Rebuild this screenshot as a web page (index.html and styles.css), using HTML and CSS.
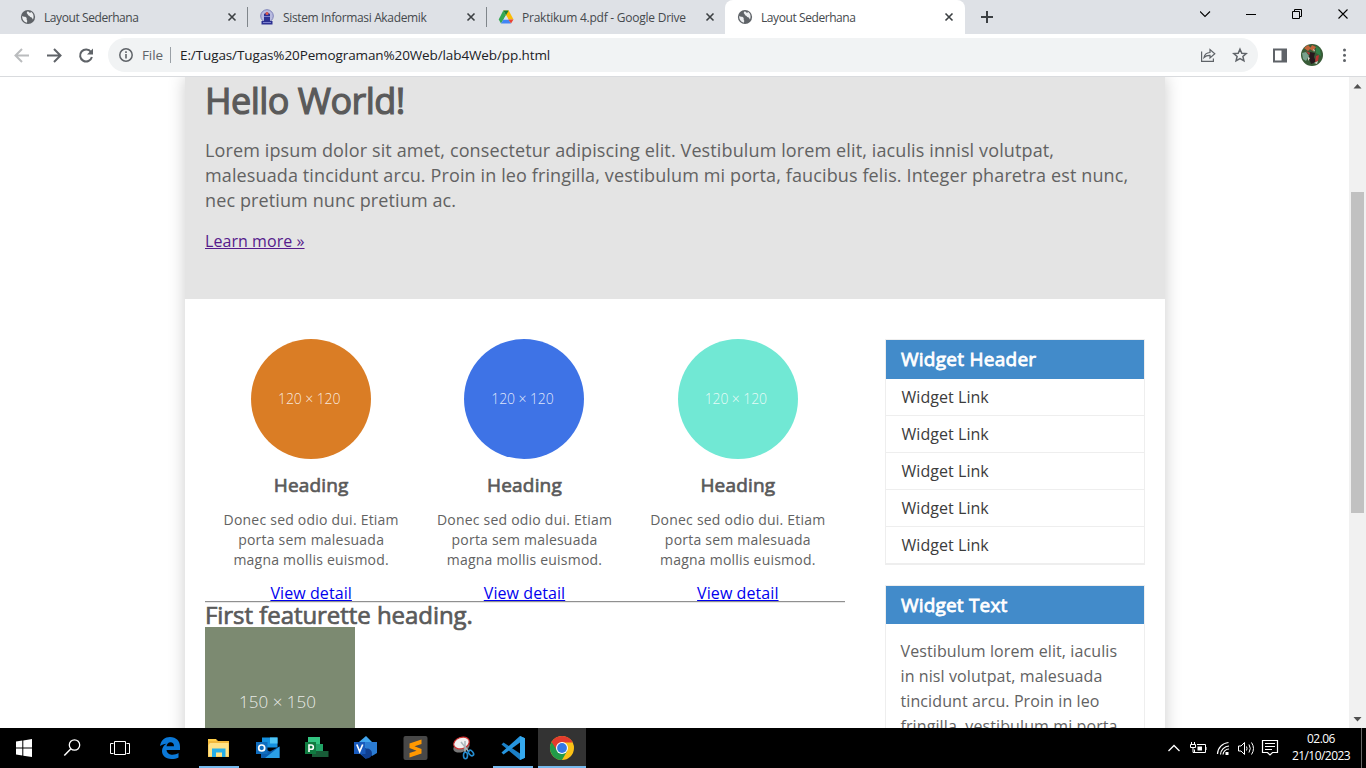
FILE: index.html
```html
<!DOCTYPE html>
<html lang="id">
<head>
<meta charset="utf-8">
<title>Layout Sederhana</title>
<link rel="stylesheet" href="styles.css">
</head>
<body>
<svg class="defs" width="0" height="0">
  <defs>
    <symbol id="globe" viewBox="0 0 16 16"><circle cx="8" cy="8" r="7.1" fill="#5f6368"/><path d="M2.2 7.1C3.5 8 5 7.5 6.300 8.400 7.300 9.200 6.200 10.400 7 11.300 7.600 12 6.900 13.200 6.900 13.700 4.300 13.300 1.900 10.800 2.200 7.100ZM8 2.300C6.700 3 6.300 4.200 7.300 4.800 8.300 5.300 7.300 6.300 8.700 6.600 10.200 6.900 9.500 8.300 11 8.300 12.100 8.300 12.200 9.800 12.900 10.600 14.500 7.500 13.200 3.600 10.700 2.700 11 4 10 4 9.400 3.600Z" fill="#eceef0"/></symbol>
    <symbol id="x" viewBox="0 0 10 10"><path d="M1.500 1.500 8.500 8.500M8.500 1.500 1.500 8.500" stroke="#3c4043" stroke-width="1.600" fill="none"/></symbol>
  </defs>
</svg>
<div class="screen">
  <div class="tabs">
    <div class="tab"><svg class="fav"><use href="#globe"/></svg><span class="title">Layout Sederhana</span><svg class="close"><use href="#x"/></svg></div>
    <div class="tab sep"><svg class="fav" viewBox="0 0 16 16"><circle cx="8" cy="7" r="6.300" fill="#b9bbe0" stroke="#7d81b8" stroke-width="1"/><path d="M2.500 12h11v3.500h-11zM5 5l3-2 3 2v7H5z" fill="#2d3192"/><circle cx="8" cy="4.500" r="1.500" fill="#e0584c"/><path d="M5 7.500h6M4 13.500h8" stroke="#7d82cf"/></svg><span class="title t2">Sistem Informasi Akademik</span><svg class="close"><use href="#x"/></svg></div>
    <div class="tab sep"><svg class="fav" viewBox="0 0 16 16"><path d="M5.300 1.500h5.400L15.500 10.500H10.500z" fill="#fbbc04"/><path d="M5.300 1.500h5.400L8 6.200z" fill="#188038"/><path d="M5.300 1.500 8 6.200 3 14.500.7 10.500z" fill="#34a853"/><path d="M5.500 10.500h5L13 14.500H3z" fill="#4285f4"/><path d="M10.300 10.500h5.200L13 14.500z" fill="#ea4335"/><path d="M8 6.200 10.500 10.500h-5z" fill="#dee1e6"/></svg><span class="title t3">Praktikum 4.pdf - Google Drive</span><svg class="close"><use href="#x"/></svg></div>
    <div class="tab active"><svg class="fav"><use href="#globe"/></svg><span class="title">Layout Sederhana</span><svg class="close"><use href="#x"/></svg></div>
    <svg class="plus" viewBox="0 0 12 12"><path d="M6 0v12M0 6h12" stroke="#3c4043" stroke-width="2"/></svg>
    <svg class="winctl" viewBox="0 0 166 34" fill="none" stroke="#000"><path d="M0 11.500 5 16.500 10 11.500" stroke-width="1.100"/><path d="M46 14.500h10" /><path d="M92.500 11.500h7v7h-7zM94.500 11.500v-2h7v7h-2"/><path d="M138.500 9.500l9 9M147.500 9.500l-9 9" stroke-width="1.100"/></svg>
  </div>
  <div class="toolbar">
    <svg class="nav" viewBox="0 0 108 42" fill="none" stroke-width="2"><path d="M29 21.500H16M22 15l-6.500 6.500L22 28" stroke="#babcbe"/><path d="M47 21.500h13M54 15l6.500 6.500L54 28" stroke="#5f6368"/><path d="M91 18a6 6 0 1 0 .9 5" stroke="#5f6368"/><path d="M93 14.500v6h-6z" fill="#5f6368" stroke="none"/></svg>
    <div class="omnibox">
      <svg class="info" viewBox="0 0 14 14"><circle cx="7" cy="7" r="6.200" fill="none" stroke="#5f6368" stroke-width="1.500"/><path d="M7 6v4.500M7 3.300v1.600" stroke="#5f6368" stroke-width="1.600"/></svg>
      <span class="scheme">File</span><i class="bar"></i><span class="url">E:/Tugas/Tugas%20Pemograman%20Web/lab4Web/pp.html</span>
      <svg class="acts" viewBox="0 0 50 16" fill="none" stroke="#5f6368" stroke-width="1.200"><path d="M1.600 4.500v9.900h11.800v-3M4 10.500C4.500 7.500 6.500 5.700 10 5.500V2.500l4.800 4.300L10 11V8.300C7.500 8.200 5.500 9 4 10.500Z"/><path d="M40 2.200l1.800 4 4.400.4-3.300 2.900 1 4.300L40 11.500l-3.900 2.300 1-4.300-3.300-2.900 4.400-.4Z" stroke-width="1.500"/></svg>
    </div>
    <svg class="right" viewBox="0 0 108 42"><path d="M16 15.500h12v12H16z" fill="none" stroke="#5f6368" stroke-width="2"/><path d="M23.500 15h5v13h-5z" fill="#5f6368"/>
      <circle cx="54" cy="21" r="11" fill="#385b37"/><path d="M46 14l4-3 3 3-3 3zM54 11l4 2-3 4-3-2z" fill="#c3643a"/><path d="M58 12l4 3 1 7-5-3z" fill="#318148"/><path d="M44 19l4-1 3 4-3 5-3-2z" fill="#78a18d"/><path d="M52 18l5 1-1 4 2 5-5 2-2-6z" fill="#26181d"/><path d="M58 22l3-1-1 6-3 1zM48 17l4 2-1 2z" fill="#ba3434"/><path d="M50 23l2 1-2 3zM56 29l4-2-1 3zM55 15l2 1-1 2z" fill="#d4d5c9"/>
      <circle cx="86.500" cy="16" r="1.500" fill="#5f6368"/><circle cx="86.500" cy="21.300" r="1.500" fill="#5f6368"/><circle cx="86.500" cy="26.600" r="1.500" fill="#5f6368"/></svg>
  </div>
  <div class="view">
    <div class="page">
      <div class="container">
        <section class="hero">
          <h1>Hello World!</h1>
          <p>Lorem ipsum dolor sit amet, consectetur adipiscing elit. Vestibulum lorem elit, iaculis innisl volutpat,<br>malesuada tincidunt arcu. Proin in leo fringilla, vestibulum mi porta, faucibus felis. Integer pharetra est nunc,<br>nec pretium nunc pretium ac.</p>
          <a class="visited" href="#">Learn more »</a>
        </section>
        <div class="columns">
          <main class="main">
            <div class="boxes">
              <div class="box"><div class="circle orange">120 × 120</div><h3>Heading</h3><p>Donec sed odio dui. Etiam<br>porta sem malesuada<br>magna mollis euismod.</p><a href="#">View detail</a></div>
              <div class="box"><div class="circle blue">120 × 120</div><h3>Heading</h3><p>Donec sed odio dui. Etiam<br>porta sem malesuada<br>magna mollis euismod.</p><a href="#">View detail</a></div>
              <div class="box"><div class="circle mint">120 × 120</div><h3>Heading</h3><p>Donec sed odio dui. Etiam<br>porta sem malesuada<br>magna mollis euismod.</p><a href="#">View detail</a></div>
            </div>
            <hr>
            <h2>First featurette heading.</h2>
            <div class="square">150 × 150</div>
          </main>
          <aside class="side">
            <div class="widget"><h3>Widget Header</h3><ul><li>Widget Link</li><li>Widget Link</li><li>Widget Link</li><li>Widget Link</li><li>Widget Link</li></ul></div>
            <div class="widget text"><h3>Widget Text</h3><p>Vestibulum lorem elit, iaculis<br>in nisl volutpat, malesuada<br>tincidunt arcu. Proin in leo<br>fringilla, vestibulum mi porta</p></div>
          </aside>
        </div>
      </div>
    </div>
    <div class="scroll"><svg viewBox="0 0 17 17"><path d="M4.500 11.500h8l-4-4.500z" fill="#505050"/></svg><div class="thumb"></div><svg viewBox="0 0 17 17"><path d="M4.500 6h8l-4 4.500z" fill="#505050"/></svg></div>
  </div>
  <div class="taskbar">
    <div class="cell"><svg viewBox="0 0 48 40"><path d="M16 13.600l6.300-1v7H16zM23.300 12.400l8.700-1.300v8.500h-8.700zM16 20.500h6.300v7L16 26.600zM23.300 20.500H32V29l-8.700-1.300z" fill="#fff"/></svg></div>
    <div class="cell"><svg viewBox="0 0 48 40"><circle cx="26.500" cy="17" r="5.200" fill="none" stroke="#fff" stroke-width="1.300"/><path d="M22.700 21 16.300 27.500" stroke="#fff" stroke-width="1.500"/></svg></div>
    <div class="cell last"><svg viewBox="0 0 48 40" fill="none" stroke="#fff"><path d="M18.500 13.500h11v13h-11zM17.500 15.500h-3v10h3M30.500 15.500h3v10h-3"/></svg></div>
    <div class="app"><svg viewBox="0 0 48 40"><path d="M14 18C15 12 19 9 24 9c6.500 0 10 4.300 10 9.500V22H20.500c.5 3.700 3.500 4.700 6 4.700 2.300 0 4.300-.6 6-1.600v4.500c-2 1-4.500 1.500-7 1.500-6.500 0-9.500-4-9.500-8 0-3.200 1.700-6 4.500-7.300-2.500.2-4.700 1-6.500 2.200zM20.500 18.300H28c0-2.500-1.300-4-3.500-4-2.300 0-3.600 1.700-4 4z" fill="#0b78d7"/></svg></div>
    <div class="app open"><svg viewBox="0 0 48 40"><path d="M13 11h8l2 2h11v16H13z" fill="#f2b83c"/><path d="M15 15h18.500v13.500H13.500V17z" fill="#ffe287"/><path d="M13 11h8v2h-8z" fill="#ffce47"/><path d="M17 29v-8.500h13.500V29H27v-4.500h-6V29z" fill="#26aee8"/></svg></div>
    <div class="app"><svg viewBox="1 0 48 40"><path d="M19 9.500h15.500v10H19z" fill="#1490df"/><path d="M27 9.500h7.500v6H27z" fill="#50c5f5"/><path d="M18 19l9 4.500 9.500-5V30H18z" fill="#0a5daf"/><path d="M36.500 18.500V30H22z" fill="#2b9fe6"/><path d="M13 14h11.500v12H13z" fill="#0f6cbd"/><circle cx="18.700" cy="20" r="3" fill="none" stroke="#fff" stroke-width="1.700"/></svg></div>
    <div class="app"><svg viewBox="1 0 48 40"><path d="M16 9h12v7H16z" fill="#33c481"/><path d="M20 16h11v7.500H20z" fill="#21a366"/><path d="M20 23h16.500v6H20z" fill="#185c37"/><path d="M13 14h11v12H13z" fill="#107c41"/><path d="M17 24v-7h2.200a2 2 0 0 1 0 4.300H17" fill="none" stroke="#fff" stroke-width="1.600"/></svg></div>
    <div class="app"><svg viewBox="1 0 48 40"><path d="M18 14 25 8l6 6-6 7z" fill="#41a5ee"/><path d="M25 14h11v11l-5 3-6-6z" fill="#2b7cd3"/><path d="M18 25h12l-5 6z" fill="#185abd"/><circle cx="26" cy="25.500" r="5" fill="#103f91"/><path d="M13 14h11.500v12H13z" fill="#185abd"/><path d="M15.800 16.500 18.700 23.500 21.700 16.500" fill="none" stroke="#fff" stroke-width="1.700"/></svg></div>
    <div class="app"><svg viewBox="0 0 48 40"><rect x="12.500" y="8" width="24" height="24" rx="2" fill="#484848"/><path d="M18.500 15.500l12-4v4.500l-7 2.300 7 2.700v4.500l-12 4V25l7-2.300-7-2.700z" fill="#ff9800"/></svg></div>
    <div class="app"><svg viewBox="0 0 48 40"><ellipse cx="21.500" cy="19" rx="8.500" ry="5" fill="#777" transform="rotate(-20 21.500 19)"/><ellipse cx="21.500" cy="15" rx="8" ry="5.600" fill="#f1f1f1" stroke="#cf3030" stroke-width="1.200" transform="rotate(-20 21.500 15)"/><path d="M21 14l8 10M25 13l0 12" stroke="#aab5ba" stroke-width="1.500"/><ellipse cx="25.500" cy="27.500" rx="2" ry="3.200" fill="none" stroke="#258dd0" stroke-width="1.600"/><ellipse cx="31" cy="25" rx="2" ry="3.200" fill="none" stroke="#258dd0" stroke-width="1.600" transform="rotate(-40 31 25)"/></svg></div>
    <div class="app open"><svg viewBox="0 0 48 40"><path d="M31 8l5 2.300v19.500L31 32 12.500 16.500l2-2L31 25.500z" fill="#1b80c7"/><path d="M31 8l5 2.300v19.500L31 32z" fill="#35a9ee"/><path d="M31 8v6.500L14.500 26.500l-2-2z" fill="#2695df"/></svg></div>
    <div class="app current"><svg viewBox="0 0 48 40"><circle cx="24" cy="20" r="12" fill="#fbc116"/><path d="M13.600 14A12 12 0 0 0 24 32l5.200-9z" fill="#229b49"/><path d="M24 14.500h10.700A12 12 0 0 0 13.600 14L19 22.500z" fill="#e33b2e"/><circle cx="24" cy="20" r="6" fill="#fff"/><circle cx="24" cy="20" r="4.900" fill="#3478e5"/></svg></div>
    <svg class="tray" viewBox="0 0 116 40" fill="none" stroke="#fff"><path d="M4.500 23l5.500-5.500 5.500 5.500" stroke-width="1.300"/><g transform="translate(2 0)"><path d="M31 16.500h8.500v8h-11v-3M40 19v3M25.500 14v2M28.500 14v2M24.500 16.500h5v3h-5zM27 19v5.500h2"/><path d="M31.500 18.500h4.500v4h-4.500z" fill="#fff" stroke="none"/></g><path d="M53.500 26a12 12 0 0 1 11-11.500M56.500 26.500a9 9 0 0 1 8.500-8.500M59 26.500a6 6 0 0 1 6-5.500" stroke-width="1.200"/><path d="M61.500 24h3v3h-3z" fill="#fff" stroke="none"/><path d="M74.500 18h2.500l3.500-3.500v12L77 23h-2.500zM82.500 18.500q1 2 0 4M85 16.500q2.500 4 0 8M87.500 14.500q4 6 0 12"/><path d="M98.500 12.500h15v12h-5l-2.500 2.500-2.500-2.500h-5zM101 15.500h10M101 18.500h10M101 21.500h7" stroke-width="1.200"/></svg>
    <div class="clock"><span class="time">02.06</span><span class="date">21/10/2023</span></div>
    <i class="peek"></i>
  </div>
</div>
</body>
</html>
```
FILE: styles.css
```css
* { box-sizing: border-box; margin: 0; padding: 0; }
body { width: 1366px; height: 768px; overflow: hidden; background: #fff; font-family: "Open Sans", sans-serif; }
.defs { display: none; }
svg { display: block; flex: none; }
.screen { display: flex; flex-direction: column; width: 1366px; height: 768px; }

.tabs { display: flex; height: 34px; padding-left: 8px; background: #dee1e6; }
.tab { display: flex; align-items: center; width: 239px; padding: 0 10px 0 12px; }
.tab.sep { background: linear-gradient(#80868b, #80868b) 0 7px / 1px 20px no-repeat; }
.tab.active { width: 240px; padding-right: 11px; background: #fff; border-radius: 8px 8px 0 0; }
.fav { width: 16px; height: 16px; margin-right: 8px; }
.title { flex: 1; padding-top: 1px; font-size: 12px; line-height: 16px; letter-spacing: -.42px; color: #45494d; white-space: nowrap; }
.t2 { letter-spacing: -.35px; }
.t3 { letter-spacing: -.24px; }
.close { width: 10px; height: 10px; }
.plus { width: 12px; height: 12px; margin: 11px 0 0 16px; }
.winctl { width: 166px; height: 34px; margin-left: auto; }

.toolbar { display: flex; height: 43px; background: #fff; border-bottom: 1px solid #d9dbde; }
.nav { width: 108px; height: 42px; }
.omnibox { display: flex; align-items: center; width: 1150px; height: 34px; margin-top: 4px; padding: 0 8px 0 11px; border-radius: 17px; background: #f1f3f4; }
.info { width: 14px; height: 14px; margin-right: 9px; }
.scheme { width: 28px; font-size: 13.500px; letter-spacing: -.1px; color: #5f6368; }
.bar { width: 1px; height: 16px; background: #9aa0a6; }
.url { margin-left: 9px; font-size: 13.500px; color: #202124; white-space: nowrap; letter-spacing: -.11px; }
.acts { width: 50px; height: 16px; margin-left: auto; }
.right { width: 108px; height: 42px; }

.view { display: flex; height: 651px; overflow: hidden; }
.page { width: 1349px; height: 651px; padding-left: 185px; overflow: hidden; }
.container { width: 980px; height: 900px; box-shadow: 0 0 16px #ccc; background: #fff; color: #5a5a5a; }
h1, h2, h3 { font-weight: 400; -webkit-text-stroke: .7px currentColor; white-space: nowrap; }
p, a, li { white-space: nowrap; }
.container p { color: #626262; }
.hero { height: 222px; padding: 6px 20px 0; background: #e4e4e4; }
h1 { font-size: 36px; line-height: 36px; letter-spacing: -.53px; -webkit-text-stroke-width: 1.200px; }
.hero p { margin: 19px 0 16px; font-size: 18px; line-height: 25px; letter-spacing: .12px; }
.hero a { display: inline-block; font-size: 16px; line-height: 25px; letter-spacing: .06px; }
a { color: #00e; }
a.visited { color: #551a8b; }
.columns { display: flex; justify-content: space-between; padding: 40px 20px 0; }
.main { width: 640px; }
.boxes { display: grid; grid-template-columns: repeat(3, 1fr); height: 262px; }
.box { display: flex; flex-direction: column; align-items: center; padding-right: 1px; text-align: center; }
.circle { display: flex; align-items: center; justify-content: center; width: 120px; height: 120px; padding: 0 4px 2px 0; border-radius: 50%; font-size: 14px; font-weight: 300; letter-spacing: -.1px; color: rgba(255,255,255,.85); }
.orange { background: #da7d25; }
.blue { background: #3e73e6; }
.mint { background: #71e8d4; }
.box h3 { margin-top: 14px; font-size: 19px; line-height: 25px; letter-spacing: .18px; }
.box p { margin-top: 12px; font-size: 14px; line-height: 20px; letter-spacing: .22px; }
.box a { margin-top: 11px; font-size: 16px; line-height: 25px; letter-spacing: .08px; }
hr { height: 2px; border: 0; border-top: 1px solid #909090; background: #e8e8e8; }
h2 { font-size: 24px; line-height: 24px; letter-spacing: -.05px; }
.square { display: flex; align-items: center; justify-content: center; width: 150px; height: 150px; padding: 0 5px 2px 0; background: #7c8a71; font-size: 17px; font-weight: 300; color: rgba(255,255,255,.85); }
.side { width: 260px; }
.widget { margin-bottom: 20px; border: 1px solid #eee; }
.widget h3 { height: 39px; padding-left: 15px; background: #428bca; color: #fff; font-size: 19px; line-height: 38px; letter-spacing: .26px; -webkit-text-stroke-width: .8px; }
.widget.text h3 { height: 38px; letter-spacing: .18px; }
ul { list-style: none; }
li { height: 37px; padding-left: 15.500px; border-bottom: 1px solid #eee; color: #3c3c3c; font-size: 16px; line-height: 36px; letter-spacing: .05px; }
.widget p { height: 150px; padding: 15px 14.500px; font-size: 16px; line-height: 25px; letter-spacing: .1px; }

.scroll { display: flex; flex-direction: column; width: 17px; background: #f1f1f1; }
.scroll svg { width: 17px; height: 17px; }
.thumb { width: 13px; height: 321px; margin: 98px 0 auto 2px; background: #c1c1c1; }

.taskbar { display: flex; height: 40px; background: #000; }
.cell { width: 48px; }
.cell.last { margin-right: 2px; }
.app { width: 48px; height: 40px; margin-right: 1px; }
.cell svg, .app svg { width: 48px; height: 40px; }
.open { background: linear-gradient(#76b9ed, #76b9ed) 4px 38px / 40px 2px no-repeat; }
.current { background: #333; box-shadow: inset 0 -2px #76b9ed; }
.tray { width: 116px; height: 40px; margin-left: auto; }
.clock { display: flex; flex-direction: column; align-items: center; width: 81px; padding: 2px 0 0 1px; color: #fff; font-size: 12px; line-height: 17px; letter-spacing: -.55px; }
.peek { width: 1px; margin-right: 4px; background: #666; }
```
